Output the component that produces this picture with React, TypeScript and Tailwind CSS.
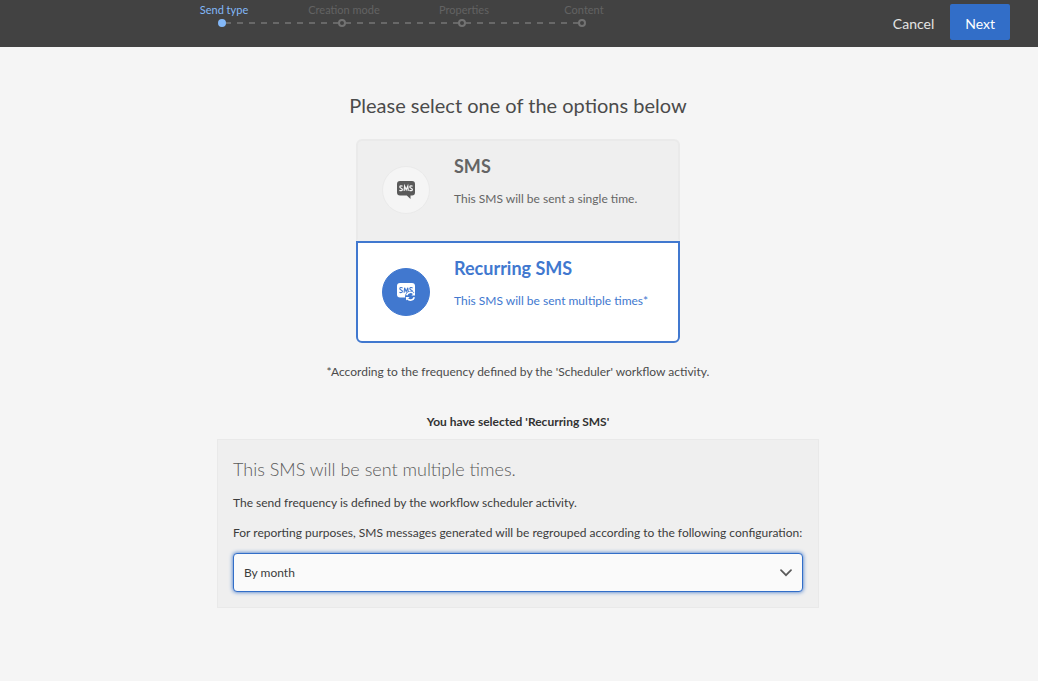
import { useState } from "react";
import type { ReactNode } from "react";

const steps = ["Send type", "Creation mode", "Properties", "Content"];

const dashes =
  "h-0.5 flex-1 bg-[repeating-linear-gradient(90deg,transparent_0_3px,#686868_3px_9px,transparent_9px_12px)]";

function Wizard({ current }: { current: number }) {
  return (
    <ol className="flex">
      {steps.map((step, i) => (
        <li
          key={step}
          aria-current={i === current ? "step" : undefined}
          className="flex w-[120px] flex-col"
        >
          <span
            className={
              "pl-1 text-center text-[11px] leading-[19px] " +
              (i === current ? "text-[#83b8f8]" : "text-[#636363]")
            }
          >
            {step}
          </span>
          <span className="flex h-2 items-center">
            <span className={i === 0 ? "h-0.5 flex-1" : dashes} />
            <span
              className={
                "z-10 -mx-1 size-2 rounded-full border-2 " +
                (i === current
                  ? "border-[#83b8f8] bg-[#83b8f8]"
                  : "border-[#737373] bg-[#424242]")
              }
            />
            <span className={i === steps.length - 1 ? "h-0.5 flex-1" : dashes} />
          </span>
        </li>
      ))}
    </ol>
  );
}

function SmsIcon() {
  return (
    <svg viewBox="0 0 18 18" className="size-[18px]" aria-hidden="true">
      <path
        fill="#5a5a5a"
        d="M3 0h12a3 3 0 0 1 3 3v8.500a3 3 0 0 1-3 3h-1.500V18l-3.700-3.500H3a3 3 0 0 1-3-3V3a3 3 0 0 1 3-3Z"
      />
      <g fill="none" stroke="#f5f5f5" strokeWidth="1.200">
        <path d="M5.600 5.200C4.400 4.500 2.800 4.800 2.800 6c0 1.400 2.600 1 2.600 2.500 0 1.300-1.800 1.500-3 .7" />
        <path d="M7.100 9.900 7.600 5l1.600 3.700L10.800 5l.5 4.900" />
        <path d="M15.600 5.200c-1.200-.7-2.800-.4-2.800.8 0 1.400 2.600 1 2.600 2.500 0 1.300-1.800 1.500-3 .7" />
      </g>
    </svg>
  );
}

function RecurringIcon() {
  return (
    <svg viewBox="0 0 18 18" className="size-[18px]" aria-hidden="true">
      <rect width="18" height="14.500" rx="3" fill="#fff" />
      <g fill="none" stroke="#4178cf" strokeWidth="1.100">
        <path d="M5.600 4.900C4.400 4.200 2.800 4.500 2.800 5.700c0 1.400 2.600 1.200 2.600 2.700 0 1.300-1.800 1.500-3 .7" />
        <path d="M7.100 9.800 7.600 4.700l1.600 3.900 1.600-3.900.5 5.100" />
        <path d="M15.600 4.900c-1.200-.7-2.800-.4-2.800.8 0 1.400 2.600 1 2.600 2.500" />
      </g>
      <circle cx="13.500" cy="13.200" r="5.400" fill="#4178cf" />
      <g fill="none" stroke="#fff" strokeWidth="1.600">
        <path d="M9.700 12.200a4 4 0 0 1 6.900-1.500" />
        <path d="M17.300 14.200a4 4 0 0 1-6.900 1.500" />
      </g>
      <path fill="#fff" d="M18 8.900v3.600h-3.600ZM9 17.500v-3.600h3.600Z" />
    </svg>
  );
}

type OptionProps = {
  value: string;
  title: string;
  text: string;
  icon: ReactNode;
  edge: string;
  checked: boolean;
  onSelect: (value: string) => void;
};

function Option({ value, title, text, icon, edge, checked, onSelect }: OptionProps) {
  return (
    <label
      className={
        "relative flex h-[102px] cursor-pointer items-center gap-6 border-2 pl-6 " +
        edge +
        (checked
          ? " border-[#4178cf] bg-white text-[#4178cf]"
          : " border-[#eaeaea] bg-[#efefef] text-[#656565] first-of-type:border-b-[#efefef]")
      }
    >
      <input
        type="radio"
        name="send-type"
        value={value}
        checked={checked}
        onChange={() => onSelect(value)}
        className="sr-only"
      />
      <span
        className={
          "flex size-12 shrink-0 items-center justify-center rounded-full border " +
          (checked ? "border-[#4178cf] bg-[#4178cf]" : "border-[#eaeaea] bg-[#f5f5f5]")
        }
      >
        {icon}
      </span>
      <span className="flex flex-col gap-[9px] self-start pt-[11px]">
        <span className="text-[18px] leading-7 font-bold">{title}</span>
        <span className="text-[12px] leading-5">{text}</span>
      </span>
    </label>
  );
}

export default function App() {
  const [type, setType] = useState("recurring");
  const [period, setPeriod] = useState("month");

  return (
    <div className="min-h-screen bg-[#f5f5f5] font-['Lato','Noto_Sans',sans-serif] text-[12px] leading-5 text-[#3c3c3c]">
      <header className="flex h-[47px] justify-between bg-[#424242] pr-7 pl-[162px]">
        <Wizard current={0} />
        <div className="flex items-start gap-4 pt-1 text-[14px]">
          <button type="button" className="h-9 pt-1 text-[#e4e4e4]">
            Cancel
          </button>
          <button type="button" className="h-9 rounded-xs bg-[#326ec8] px-[15px] pt-1 text-white">
            Next
          </button>
        </div>
      </header>

      <main className="flex flex-col items-center pt-[42px] pr-0.5">
        <h1 className="text-[20px] leading-8 text-[#4b4b4b]">
          Please select one of the options below
        </h1>

        <div role="radiogroup" aria-label="Send type" className="mt-[18px] w-[324px]">
          <Option
            value="single"
            title="SMS"
            text="This SMS will be sent a single time."
            icon={<SmsIcon />}
            edge="rounded-t-md"
            checked={type === "single"}
            onSelect={setType}
          />
          <Option
            value="recurring"
            title="Recurring SMS"
            text="This SMS will be sent multiple times*"
            icon={<RecurringIcon />}
            edge="rounded-b-md"
            checked={type === "recurring"}
            onSelect={setType}
          />
        </div>

        <p className="mt-[19px] text-[#4b4b4b]">
          *According to the frequency defined by the 'Scheduler' workflow activity.
        </p>
        <p className="mt-[30px] font-bold text-[#323232]">
          You have selected '{type === "single" ? "SMS" : "Recurring SMS"}'
        </p>

        <section className="mt-[7px] flex w-[602px] flex-col border border-[#e9e9e9] bg-[#efefef] p-[15px]">
          <h2 className="text-[18px] leading-7 font-light text-[#5a5a5a]">
            This SMS will be sent multiple times.
          </h2>
          <p className="mt-2.5">The send frequency is defined by the workflow scheduler activity.</p>
          <label htmlFor="period" className="mt-2.5 whitespace-nowrap">
            For reporting purposes, SMS messages generated will be regrouped according to the
            following configuration:
          </label>
          <div className="mt-2.5 grid items-center">
            <select
              id="period"
              value={period}
              onChange={(e) => setPeriod(e.target.value)}
              className="col-start-1 row-start-1 h-[39px] appearance-none rounded-sm border border-[#326ec8] bg-[#fafafa] px-2.5 shadow-[0_0_4px_#326ec8] outline-none"
            >
              <option value="day">By day</option>
              <option value="week">By week</option>
              <option value="month">By month</option>
              <option value="year">By year</option>
            </select>
            <svg
              viewBox="0 0 12 8"
              aria-hidden="true"
              className="pointer-events-none col-start-1 row-start-1 mr-[11px] h-2 w-3 justify-self-end"
            >
              <path d="M1 1.200l5 5 5-5" fill="none" stroke="#5a5a5a" strokeWidth="1.700" strokeLinecap="round" />
            </svg>
          </div>
        </section>
      </main>
    </div>
  );
}
